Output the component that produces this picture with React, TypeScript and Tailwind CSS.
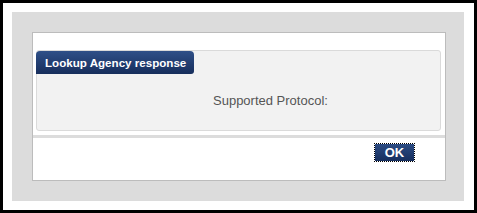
export default function App() {
  return (
    <div className="w-[477px] h-[213px] border-[3px] border-black bg-white p-[9px] font-['Liberation_Sans',Arial,sans-serif]">
      <div className="w-[452px] h-[189px] bg-[#dcdcdc] pt-[20px] pl-[20px]">
        <div className="w-[414px] h-[149px] border border-[#bcbcbc] bg-white flex flex-col">
          <div className="pt-[17px] pl-[3px] pr-[4px]">
            <div className="h-[81px] border border-[#dadada] rounded-[3px] bg-[#f2f2f2]">
              <div className="flex items-center w-[158px] h-[23px] -ml-px pl-[9px] pt-px rounded-tl-[4px] rounded-tr-[4px] rounded-br-[3px] bg-gradient-to-b from-[#2f5088] to-[#172e5c] text-white text-[11.6px] font-bold">
                Lookup Agency response
              </div>
              <div className="pt-[19px] pl-[176px] text-[13px] leading-[15px] text-[#555555]">
                Supported Protocol:
              </div>
            </div>
          </div>
          <div className="mt-[4px] h-[3px] bg-[#dcdcdc]" />
          <div className="flex justify-end pt-[5px] pr-[30px]">
            <button className="w-[41px] h-[19px] border border-dotted border-black bg-clip-padding bg-gradient-to-b from-[#2c4c84] to-[#172f5e] text-white text-[13px] font-bold leading-none">
              OK
            </button>
          </div>
        </div>
      </div>
    </div>
  );
}
